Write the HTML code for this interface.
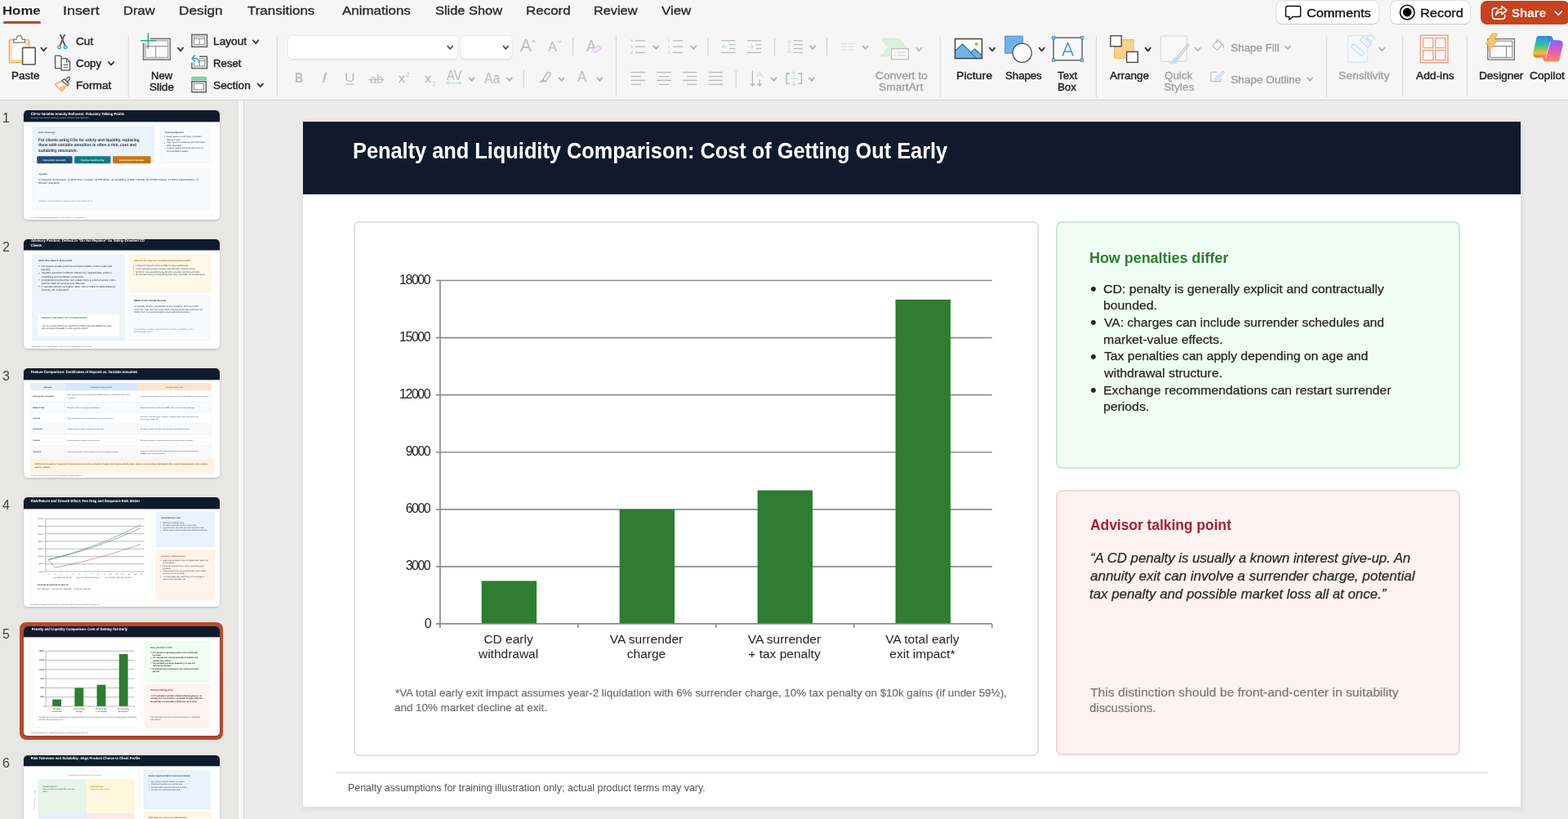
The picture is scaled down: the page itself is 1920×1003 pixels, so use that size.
<!DOCTYPE html>
<html lang="en"><head><meta charset="utf-8"><title>Penalty and Liquidity Comparison</title>
<style>
html,body{margin:0;padding:0;}
body{width:1920px;height:1003px;overflow:hidden;background:#ebebeb;font-family:'Liberation Sans',sans-serif;}
#app{position:relative;width:1920px;height:1003px;overflow:hidden;background:#ebebeb;will-change:transform;}
.t{position:absolute;white-space:pre;line-height:1;transform-origin:0 50%;}
.a{position:absolute;}
svg{position:absolute;overflow:visible;}
#ribbon{position:absolute;left:0;top:0;width:1920px;height:122px;background:#f6f6f6;border-bottom:1px solid #d3d3d1;}
#panel{position:absolute;left:0;top:123px;width:292px;height:880px;background:#e7e7e5;overflow:hidden;}
#split{position:absolute;left:292px;top:123px;width:5.5px;height:880px;background:#f7f7f5;border-right:1.5px solid #d4d4d4;}
#main{position:absolute;left:299px;top:123px;width:1621px;height:880px;background:#ebebeb;overflow:hidden;}
.slide{position:absolute;width:1491px;height:839px;background:#fff;overflow:hidden;}
#slide{left:72px;top:26px;box-shadow:1px 2px 8px 1px rgba(0,0,0,.075);}
.sep{position:absolute;width:1px;background:#d6d6d6;}
.card{position:absolute;box-sizing:border-box;border-radius:6px;}
.thumb{position:absolute;width:240px;height:134.4px;border-radius:5px;overflow:hidden;box-shadow:0 1px 3px rgba(0,0,0,.22);background:#fff;}
.thumb .slide{left:0;top:-0.5px;transform:scale(0.16097);transform-origin:0 0;}
.thumb .ttl{margin-top:-5px;}
.thumb svg line{stroke-width:3px;stroke:#747474;}
.num{position:absolute;font-size:16px;color:#444;line-height:1;}
.thumb .t,.thumb text{text-rendering:geometricPrecision;}

</style></head>
<body>
<div id="app">
<div id="panel"><span class="num" style="left:3px;top:14.2px">1</span><div class="thumb" style="left:28.8px;top:12.0px"><div class="slide"><div class="a" style="left:0px;top:0px;width:1491px;height:89px;background:#0f1b2d;"></div><span class="t" style="left:54.97px;top:11px;line-height:31px;font-size:28px;color:#fff;transform:scaleX(0.9122);font-weight:700;">CD-to-Variable Annuity Rollovers: Fiduciary Talking Points</span><span class="t" style="left:54.60px;top:51px;line-height:15px;font-size:13.5px;color:#cfd6e0;transform:scaleX(1.0958);">Fiduciary talk track for advisory practices: client-first training edition</span><div class="card" style="left:66px;top:125px;width:929px;height:274px;background:#eaf2fb;border:2px solid #d3e2f3;border-radius:8px"></div><span class="t" style="left:113.43px;top:157px;line-height:19px;font-size:17px;color:#1f4e79;transform:scaleX(1.0670);font-weight:700;">Core message</span><span class="t" style="left:111.55px;top:206px;line-height:35px;font-size:31px;color:#1c2a3a;transform:scaleX(0.9463);font-weight:700;">For clients using CDs for safety and liquidity, replacing</span><span class="t" style="left:113.39px;top:247px;line-height:35px;font-size:31px;color:#1c2a3a;transform:scaleX(0.9687);font-weight:700;">them with variable annuities is often a risk, cost and</span><span class="t" style="left:112.45px;top:288px;line-height:35px;font-size:31px;color:#1c2a3a;transform:scaleX(0.9703);font-weight:700;">suitability mismatch.</span><div class="a" style="left:101px;top:349px;width:269px;height:57px;background:#1f4e79;border-radius:9px;"></div><span class="t" style="left:147.94px;top:370px;line-height:17px;font-size:15.5px;color:#fff;transform:scaleX(1.0617);font-weight:700;">Risk profile mismatch</span><div class="a" style="left:386px;top:349px;width:276px;height:57px;background:#0e7c86;border-radius:9px;"></div><span class="t" style="left:432.97px;top:370px;line-height:17px;font-size:15.5px;color:#fff;transform:scaleX(1.0340);font-weight:700;">Penalty &amp; liquidity drag</span><div class="a" style="left:678px;top:349px;width:289px;height:57px;background:#c9760f;border-radius:9px;"></div><span class="t" style="left:724.74px;top:370px;line-height:17px;font-size:15.5px;color:#fff;transform:scaleX(1.2627);font-weight:700;">Best-interest burden</span><div class="card" style="left:1036px;top:125px;width:386px;height:274px;background:#f8fafc;border:2px solid #e2e8f0;border-radius:8px"></div><span class="t" style="left:1072.00px;top:157px;line-height:19px;font-size:17px;color:#1f4e79;transform:scaleX(1.0131);font-weight:700;">Training objective</span><span class="t" style="left:1086.79px;top:193px;line-height:17px;font-size:15px;color:#2b3644;transform:scaleX(1.1175);">Equip advisors with clear, compliant</span><span class="t" style="left:1067.53px;top:191px;line-height:21px;font-size:18.75px;color:#2b3644;">•</span><span class="t" style="left:1087.90px;top:215px;line-height:17px;font-size:15px;color:#2b3644;transform:scaleX(1.1387);">talking points</span><span class="t" style="left:1088.12px;top:238px;line-height:17px;font-size:15px;color:#2b3644;transform:scaleX(1.1051);">Align recommendations with FINRA and</span><span class="t" style="left:1067.53px;top:236px;line-height:21px;font-size:18.75px;color:#2b3644;">•</span><span class="t" style="left:1086.83px;top:260px;line-height:17px;font-size:15px;color:#2b3644;transform:scaleX(1.0876);">NAIC standards</span><span class="t" style="left:1086.81px;top:282px;line-height:17px;font-size:15px;color:#2b3644;transform:scaleX(1.1029);">Reduce replacement risk and improve</span><span class="t" style="left:1067.53px;top:280px;line-height:21px;font-size:18.75px;color:#2b3644;">•</span><span class="t" style="left:1087.41px;top:304px;line-height:17px;font-size:15px;color:#2b3644;transform:scaleX(1.1368);">documentation quality</span><div class="card" style="left:66px;top:447px;width:1356px;height:307px;background:#f8fafc;border:2px solid #e2e8f0;border-radius:8px"></div><span class="t" style="left:113.72px;top:473px;line-height:19px;font-size:17px;color:#1f4e79;transform:scaleX(1.0614);font-weight:700;">Agenda</span><span class="t" style="left:112.07px;top:516px;line-height:21px;font-size:19px;color:#2b3644;transform:scaleX(1.1116);">1) Feature comparison  2) Risk/return impact  3) Penalties  4) Suitability &amp; best interest  5) FINRA issues  6) NAIC expectations  7)</span><span class="t" style="left:113.39px;top:542px;line-height:21px;font-size:19px;color:#2b3644;transform:scaleX(1.1128);">Advisor playbook</span><span class="t" style="left:113.39px;top:684px;line-height:16px;font-size:14.5px;color:#7a8594;transform:scaleX(1.0643);">Audience: internal advisor training (not for client distribution).</span><div class="a" style="left:40px;top:797px;width:1411px;height:2px;background:#e3e6e9;"></div><span class="t" style="left:54.71px;top:809px;line-height:14px;font-size:12.5px;color:#666;transform:scaleX(1.1471);">Internal educational training deck; not a substitute for legal advice.</span></div></div><span class="num" style="left:3px;top:172.2px">2</span><div class="thumb" style="left:28.8px;top:170.0px"><div class="slide"><div class="a" style="left:0px;top:0px;width:1491px;height:84px;background:#0f1b2d;"></div><span class="t" style="left:55.60px;top:-8px;line-height:31px;font-size:28px;color:#fff;transform:scaleX(0.9218);font-weight:700;">Advisory Position: Default to “Do Not Replace” for Safety-Oriented CD</span><span class="t" style="left:55.23px;top:29px;line-height:31px;font-size:28px;color:#fff;transform:scaleX(0.8758);font-weight:700;">Clients</span><div class="card" style="left:66px;top:119px;width:704px;height:653px;background:#eef4fb;border:2px solid #d6e4f3;border-radius:8px"></div><span class="t" style="left:114.00px;top:150px;line-height:20px;font-size:18px;color:#1f4e79;transform:scaleX(1.1094);font-weight:700;">Why this stance is prudent</span><span class="t" style="left:133.60px;top:196px;line-height:21px;font-size:19px;color:#2b3644;transform:scaleX(1.0318);">CD buyers usually prioritize principal stability, known yield and</span><span class="t" style="left:113.77px;top:193px;line-height:26px;font-size:23.75px;color:#2b3644;">•</span><span class="t" style="left:133.19px;top:222px;line-height:21px;font-size:19px;color:#2b3644;transform:scaleX(1.1196);">liquidity.</span><span class="t" style="left:134.52px;top:248px;line-height:21px;font-size:19px;color:#2b3644;transform:scaleX(1.0263);">Variable annuities introduce market risk, layered fees, product</span><span class="t" style="left:113.77px;top:245px;line-height:26px;font-size:23.75px;color:#2b3644;">•</span><span class="t" style="left:133.90px;top:274px;line-height:21px;font-size:19px;color:#2b3644;transform:scaleX(1.0294);">complexity and surrender constraints.</span><span class="t" style="left:134.52px;top:300px;line-height:21px;font-size:19px;color:#2b3644;transform:scaleX(1.0110);">A replacement should be rare unless there is a documented, client-</span><span class="t" style="left:113.77px;top:297px;line-height:26px;font-size:23.75px;color:#2b3644;">•</span><span class="t" style="left:134.21px;top:326px;line-height:21px;font-size:19px;color:#2b3644;transform:scaleX(1.0278);">specific need for annuity-only features.</span><span class="t" style="left:133.04px;top:352px;line-height:21px;font-size:19px;color:#2b3644;transform:scaleX(0.9921);">If rationale centers on “higher rates”, bonus offers or sales pressure,</span><span class="t" style="left:113.77px;top:349px;line-height:26px;font-size:23.75px;color:#2b3644;">•</span><span class="t" style="left:134.52px;top:378px;line-height:21px;font-size:19px;color:#2b3644;transform:scaleX(1.0059);">fiduciary risk is elevated.</span><div class="card" style="left:105px;top:568px;width:624px;height:173px;background:#ffffff;border:2px solid #dbe7f3;border-radius:8px"></div><span class="t" style="left:136.32px;top:588px;line-height:19px;font-size:17px;color:#0e7c86;transform:scaleX(1.0137);font-weight:700;">Fiduciary test before any recommendation</span><span class="t" style="left:136.59px;top:648px;line-height:18px;font-size:16.5px;color:#2b3644;transform:scaleX(1.0474);">Can we clearly show that expected benefits outweigh additional costs,</span><span class="t" style="left:136.31px;top:671px;line-height:18px;font-size:16.5px;color:#2b3644;transform:scaleX(1.0575);">risk and loss of liquidity for this specific client?</span><div class="card" style="left:801px;top:119px;width:621px;height:285px;background:#fff8e8;border:2px solid #f5e0b0;border-radius:8px"></div><span class="t" style="left:840.00px;top:150px;line-height:19px;font-size:17px;color:#b96a0b;transform:scaleX(1.1215);font-weight:700;">When a VA may be considered (exception path)</span><span class="t" style="left:853.35px;top:195px;line-height:17px;font-size:16px;color:#2b3644;transform:scaleX(1.0749);">Long time horizon and low odds of early withdrawals</span><span class="t" style="left:834.13px;top:192px;line-height:22px;font-size:20.0px;color:#2b3644;">•</span><span class="t" style="left:853.88px;top:217px;line-height:17px;font-size:16px;color:#2b3644;transform:scaleX(1.0766);">Client accepts market volatility and complex contract terms</span><span class="t" style="left:834.13px;top:214px;line-height:22px;font-size:20.0px;color:#2b3644;">•</span><span class="t" style="left:853.32px;top:239px;line-height:17px;font-size:16px;color:#2b3644;transform:scaleX(1.0942);">Need for annuitization/living benefit is explicit and documented</span><span class="t" style="left:834.13px;top:236px;line-height:22px;font-size:20.0px;color:#2b3644;">•</span><span class="t" style="left:853.36px;top:260px;line-height:17px;font-size:16px;color:#2b3644;transform:scaleX(1.0644);">Net benefit clearly is compelling after fees, surrender terms and taxes</span><span class="t" style="left:834.13px;top:257px;line-height:22px;font-size:20.0px;color:#2b3644;">•</span><div class="card" style="left:801px;top:429px;width:621px;height:343px;background:#f9fafb;border:2px solid #e3e8ee;border-radius:8px"></div><span class="t" style="left:840.00px;top:458px;line-height:20px;font-size:18px;color:#1c2a3a;transform:scaleX(1.0694);font-weight:700;">What to tell clients directly</span><span class="t" style="left:839.26px;top:500px;line-height:19px;font-size:17px;color:#2b3644;transform:scaleX(1.0274);font-style:italic;">“A variable annuity can provide income features, but it is not like</span><span class="t" style="left:841.51px;top:523px;line-height:19px;font-size:17px;color:#2b3644;transform:scaleX(1.0857);font-style:italic;">your CD. You give up FDIC-style deposit protection and take on</span><span class="t" style="left:840.09px;top:545px;line-height:19px;font-size:17px;color:#2b3644;transform:scaleX(0.9744);font-style:italic;">market risk, fees and potentially steep surrender penalties.”</span><span class="t" style="left:839.22px;top:676px;line-height:17px;font-size:15px;color:#7a8594;transform:scaleX(0.9549);">Document the comparison and confirm the client’s understanding in the</span><span class="t" style="left:839.45px;top:698px;line-height:17px;font-size:15px;color:#7a8594;transform:scaleX(0.9670);">plain-language record.</span><div class="a" style="left:40px;top:797px;width:1411px;height:2px;background:#e3e6e9;"></div><span class="t" style="left:56.00px;top:809px;line-height:14px;font-size:12.5px;color:#666;transform:scaleX(0.9258);">Advisor framework: CD clients should be treated as low-risk unless documented otherwise.</span></div></div><span class="num" style="left:3px;top:330.2px">3</span><div class="thumb" style="left:28.8px;top:328.0px"><div class="slide"><div class="a" style="left:0px;top:0px;width:1491px;height:89px;background:#0f1b2d;"></div><span class="t" style="left:54.39px;top:14px;line-height:31px;font-size:28px;color:#fff;transform:scaleX(0.9195);font-weight:700;">Feature Comparison: Certificates of Deposit vs. Variable Annuities</span><div class="a" style="left:53px;top:113px;width:260px;height:55px;background:#e8eef6;"></div><div class="a" style="left:313px;top:113px;width:555px;height:55px;background:#d6e8fb;"></div><div class="a" style="left:868px;top:113px;width:555px;height:55px;background:#fde4cc;"></div><div class="a" style="left:53px;top:258px;width:1370px;height:79px;background:#f8fafc;"></div><div class="a" style="left:53px;top:422px;width:1370px;height:79px;background:#f8fafc;"></div><div class="a" style="left:53px;top:591px;width:1370px;height:92px;background:#f8fafc;"></div><div class="a" style="left:53px;top:112px;width:1370px;height:2px;background:#dde3ea;"></div><div class="a" style="left:53px;top:167px;width:1370px;height:2px;background:#dde3ea;"></div><div class="a" style="left:53px;top:257px;width:1370px;height:2px;background:#dde3ea;"></div><div class="a" style="left:53px;top:336px;width:1370px;height:2px;background:#dde3ea;"></div><div class="a" style="left:53px;top:421px;width:1370px;height:2px;background:#dde3ea;"></div><div class="a" style="left:53px;top:500px;width:1370px;height:2px;background:#dde3ea;"></div><div class="a" style="left:53px;top:590px;width:1370px;height:2px;background:#dde3ea;"></div><div class="a" style="left:53px;top:682px;width:1370px;height:2px;background:#dde3ea;"></div><div class="a" style="left:52px;top:113px;width:2px;height:570px;background:#dde3ea;"></div><div class="a" style="left:312px;top:113px;width:2px;height:570px;background:#dde3ea;"></div><div class="a" style="left:867px;top:113px;width:2px;height:570px;background:#dde3ea;"></div><div class="a" style="left:1422px;top:113px;width:2px;height:570px;background:#dde3ea;"></div><span class="t" style="left:151.66px;top:133px;line-height:16px;font-size:14px;color:#1c2a3a;transform:scaleX(1.0775);font-weight:700;">Attribute</span><span class="t" style="left:509.47px;top:133px;line-height:16px;font-size:14px;color:#1f5fa8;transform:scaleX(0.9364);font-weight:700;">Certificate of Deposit (CD)</span><span class="t" style="left:1079.94px;top:133px;line-height:16px;font-size:14px;color:#c2620c;transform:scaleX(0.9389);font-weight:700;">Variable Annuity (VA)</span><span class="t" style="left:69.12px;top:206px;line-height:15px;font-size:13.5px;color:#1c2a3a;font-weight:700;">Principal risk / guarantee</span><span class="t" style="left:331.94px;top:196px;line-height:15px;font-size:13px;color:#3b4654;">Bank deposit product; principal typically FDIC-insured up to applicable limits if held</span><span class="t" style="left:332.81px;top:216px;line-height:15px;font-size:13px;color:#3b4654;">to maturity.</span><span class="t" style="left:886.81px;top:206px;line-height:15px;font-size:13px;color:#3b4654;">Invested in sub-accounts exposed to market risk; guarantees depend on insurer and riders.</span><span class="t" style="left:69.12px;top:290px;line-height:15px;font-size:13.5px;color:#1c2a3a;font-weight:700;">Return &amp; fees</span><span class="t" style="left:331.94px;top:290px;line-height:15px;font-size:13px;color:#3b4654;">Fixed rate; little or no ongoing explicit fees.</span><span class="t" style="left:886.94px;top:290px;line-height:15px;font-size:13px;color:#3b4654;">Market-linked returns reduced by M&amp;E, admin, fund and rider expenses.</span><span class="t" style="left:69.12px;top:372px;line-height:15px;font-size:13.5px;color:#1c2a3a;font-weight:700;">Liquidity</span><span class="t" style="left:331.94px;top:372px;line-height:15px;font-size:13px;color:#3b4654;">Early withdrawal penalty usually limited to months of interest.</span><span class="t" style="left:887.44px;top:363px;line-height:15px;font-size:13px;color:#3b4654;">Surrender schedule (often 6–8 years); possible market value adjustment and</span><span class="t" style="left:887.81px;top:382px;line-height:15px;font-size:13px;color:#3b4654;">tax penalty if under 59½.</span><span class="t" style="left:69.50px;top:454px;line-height:15px;font-size:13.5px;color:#1c2a3a;font-weight:700;">Complexity</span><span class="t" style="left:332.44px;top:454px;line-height:15px;font-size:13px;color:#3b4654;">Simple structure; easy to compare across banks.</span><span class="t" style="left:887.38px;top:454px;line-height:15px;font-size:13px;color:#3b4654;">Complex contract with riders, sub-accounts and optional benefits.</span><span class="t" style="left:69.88px;top:539px;line-height:15px;font-size:13.5px;color:#1c2a3a;font-weight:700;">Taxation</span><span class="t" style="left:331.81px;top:539px;line-height:15px;font-size:13px;color:#3b4654;">Interest taxed annually as ordinary income.</span><span class="t" style="left:887.75px;top:539px;line-height:15px;font-size:13px;color:#3b4654;">Tax-deferred growth; gains taxed as ordinary income when withdrawn.</span><span class="t" style="left:69.88px;top:630px;line-height:15px;font-size:13.5px;color:#1c2a3a;font-weight:700;">Typical fit</span><span class="t" style="left:332.38px;top:630px;line-height:15px;font-size:13px;color:#3b4654;">Capital preservation, short-to-medium horizon, emergency reserves.</span><span class="t" style="left:886.94px;top:620px;line-height:15px;font-size:13px;color:#3b4654;">Long-term retirement income, higher risk tolerance, need for annuity features;</span><span class="t" style="left:887.69px;top:640px;line-height:15px;font-size:13px;color:#3b4654;">suitable only if costs are justified.</span><div class="card" style="left:53px;top:690px;width:1394px;height:109px;background:#fff4e1;border:2px solid #f6dcae;border-radius:8px"></div><span class="t" style="left:85.08px;top:723px;line-height:16px;font-size:14px;color:#7a4a08;transform:scaleX(1.0515);font-weight:700;">FINRA/investor caution: high-yield VA promotions can involve surrender charges and complex annuity rules; advisors should clearly distinguish CDs, insured bank products, from variable</span><span class="t" style="left:85.63px;top:744px;line-height:16px;font-size:14px;color:#7a4a08;transform:scaleX(0.9895);font-weight:700;">annuity contracts.</span><span class="t" style="left:55.45px;top:809px;line-height:14px;font-size:12.5px;color:#666;transform:scaleX(0.9784);">Sources: FINRA investor insights; NAIC suitability in annuity transactions.</span></div></div><span class="num" style="left:3px;top:488.2px">4</span><div class="thumb" style="left:28.8px;top:486.0px"><div class="slide"><div class="a" style="left:0px;top:0px;width:1491px;height:89px;background:#0f1b2d;"></div><span class="t" style="left:54.38px;top:14px;line-height:31px;font-size:28px;color:#fff;transform:scaleX(0.9229);font-weight:700;">Risk/Return and Growth Effect: Fee Drag and Sequence Risk Matter</span><div class="card" style="left:53px;top:106px;width:928px;height:677px;background:#fff;border:2px solid #dfe4ea;border-radius:8px"></div><svg class="a" style="left:0;top:0" width="1491" height="839" viewBox="0 0 1491 839" font-family="Liberation Sans, sans-serif" fill="none"><line x1="160" y1="163.0" x2="918" y2="163.0" stroke="#7d7d7d" stroke-width="2.6"/><text x="152" y="168.0" font-size="13" fill="#333" text-anchor="end">200000</text><line x1="160" y1="220.4" x2="918" y2="220.4" stroke="#7d7d7d" stroke-width="2.6"/><text x="152" y="225.4" font-size="13" fill="#333" text-anchor="end">180000</text><line x1="160" y1="277.8" x2="918" y2="277.8" stroke="#7d7d7d" stroke-width="2.6"/><text x="152" y="282.8" font-size="13" fill="#333" text-anchor="end">160000</text><line x1="160" y1="335.2" x2="918" y2="335.2" stroke="#7d7d7d" stroke-width="2.6"/><text x="152" y="340.2" font-size="13" fill="#333" text-anchor="end">140000</text><line x1="160" y1="392.6" x2="918" y2="392.6" stroke="#7d7d7d" stroke-width="2.6"/><text x="152" y="397.6" font-size="13" fill="#333" text-anchor="end">120000</text><line x1="160" y1="450.0" x2="918" y2="450.0" stroke="#7d7d7d" stroke-width="2.6"/><text x="152" y="455.0" font-size="13" fill="#333" text-anchor="end">100000</text><line x1="160" y1="507.4" x2="918" y2="507.4" stroke="#7d7d7d" stroke-width="2.6"/><text x="152" y="512.4" font-size="13" fill="#333" text-anchor="end">80000</text><line x1="160" y1="564.8" x2="918" y2="564.8" stroke="#7d7d7d" stroke-width="2.6"/><text x="152" y="569.8" font-size="13" fill="#333" text-anchor="end">60000</text><line x1="168" y1="163.0" x2="168" y2="572.8" stroke="#8a8a8a" stroke-width="2"/><polyline points="188.0,475.0 234.9,464.1 281.9,452.5 328.8,440.2 375.7,427.0 422.7,413.2 469.6,398.5 516.5,383.1 563.5,367.0 610.4,350.1 657.3,332.5 704.3,314.1 751.2,295.0 798.1,275.1 845.1,254.4 892.0,233.0" stroke="#4b5563" stroke-width="3.2" stroke-linejoin="round"/><polyline points="188.0,475.0 234.9,463.0 281.9,450.2 328.8,436.6 375.7,422.1 422.7,406.8 469.6,390.6 516.5,373.7 563.5,355.9 610.4,337.2 657.3,317.8 704.3,297.5 751.2,276.4 798.1,254.4 845.1,231.6 892.0,208.0" stroke="#2e7d32" stroke-width="3.2" stroke-linejoin="round"/><polyline points="188.0,475.0 238.0,535.0 288.3,525.0 338.6,514.5 388.9,503.2 439.2,491.4 489.5,478.9 539.8,465.7 590.2,452.0 640.5,437.6 690.8,422.5 741.1,406.8 791.4,390.5 841.7,373.6 892.0,356.0" stroke="#c0305a" stroke-width="3.2" stroke-linejoin="round"/><text x="190.0" y="588.8" font-size="13" fill="#333" text-anchor="middle">0</text><text x="237.1" y="588.8" font-size="13" fill="#333" text-anchor="middle">1</text><text x="284.1" y="588.8" font-size="13" fill="#333" text-anchor="middle">2</text><text x="331.2" y="588.8" font-size="13" fill="#333" text-anchor="middle">3</text><text x="378.3" y="588.8" font-size="13" fill="#333" text-anchor="middle">4</text><text x="425.3" y="588.8" font-size="13" fill="#333" text-anchor="middle">5</text><text x="472.4" y="588.8" font-size="13" fill="#333" text-anchor="middle">6</text><text x="519.5" y="588.8" font-size="13" fill="#333" text-anchor="middle">7</text><text x="566.5" y="588.8" font-size="13" fill="#333" text-anchor="middle">8</text><text x="613.6" y="588.8" font-size="13" fill="#333" text-anchor="middle">9</text><text x="660.7" y="588.8" font-size="13" fill="#333" text-anchor="middle">10</text><text x="707.7" y="588.8" font-size="13" fill="#333" text-anchor="middle">11</text><text x="754.8" y="588.8" font-size="13" fill="#333" text-anchor="middle">12</text><text x="801.9" y="588.8" font-size="13" fill="#333" text-anchor="middle">13</text><text x="848.9" y="588.8" font-size="13" fill="#333" text-anchor="middle">14</text><text x="896.0" y="588.8" font-size="13" fill="#333" text-anchor="middle">15</text><polyline points="226,613 252,613" stroke="#2e7d32" stroke-width="3"/><text x="258" y="618" font-size="13.5" fill="#333">CD ladder (4.5%)</text><polyline points="401.2,613 427.2,613" stroke="#4b5563" stroke-width="3"/><text x="433.2" y="618" font-size="13.5" fill="#333">VA balanced (net 4.1%)</text><polyline points="619.6,613 645.6,613" stroke="#c0305a" stroke-width="3"/><text x="651.6" y="618" font-size="13.5" fill="#333">VA with −20% year-1 shock</text></svg><span class="t" style="left:105.59px;top:655px;line-height:17px;font-size:16px;color:#1c2a3a;transform:scaleX(1.0110);font-weight:700;">Illustrative outcome at year 15</span><span class="t" style="left:105.97px;top:691px;line-height:16px;font-size:14.5px;color:#3b4654;transform:scaleX(1.0161);">CD: $193,528    VA balanced: $182,694    VA shock: $150,215</span><div class="card" style="left:1006px;top:109px;width:446px;height:268px;background:#eaf2fb;border:2px solid #d3e2f3;border-radius:8px"></div><span class="t" style="left:1041.63px;top:146px;line-height:17px;font-size:16px;color:#1f4e79;transform:scaleX(1.0502);font-weight:700;">Assumptions used</span><span class="t" style="left:1059.17px;top:183px;line-height:16px;font-size:14px;color:#2b3644;transform:scaleX(1.1073);">$100,000 starting value</span><span class="t" style="left:1038.76px;top:181px;line-height:20px;font-size:17.5px;color:#2b3644;">•</span><span class="t" style="left:1058.62px;top:203px;line-height:16px;font-size:14px;color:#2b3644;transform:scaleX(1.0009);">CD ladder reinvests at 4.5% annual yield</span><span class="t" style="left:1038.76px;top:201px;line-height:20px;font-size:17.5px;color:#2b3644;">•</span><span class="t" style="left:1059.31px;top:223px;line-height:16px;font-size:14px;color:#2b3644;transform:scaleX(0.9782);">VA gross 6.5%, less 2.4% all-in fees and rider costs</span><span class="t" style="left:1038.76px;top:221px;line-height:20px;font-size:17.5px;color:#2b3644;">•</span><span class="t" style="left:1058.63px;top:244px;line-height:16px;font-size:14px;color:#2b3644;transform:scaleX(1.0897);">Shock case includes early bear market drawdown</span><span class="t" style="left:1038.76px;top:242px;line-height:20px;font-size:17.5px;color:#2b3644;">•</span><div class="card" style="left:1006px;top:401px;width:446px;height:377px;background:#fff3ea;border:2px solid #f8dcc4;border-radius:8px"></div><span class="t" style="left:1041.62px;top:439px;line-height:17px;font-size:16px;color:#c2620c;transform:scaleX(1.0719);font-weight:700;">Advisory interpretation</span><span class="t" style="left:1058.05px;top:472px;line-height:16px;font-size:14px;color:#2b3644;transform:scaleX(1.1176);">Higher gross return does not guarantee higher net</span><span class="t" style="left:1038.76px;top:470px;line-height:20px;font-size:17.5px;color:#2b3644;">•</span><span class="t" style="left:1058.72px;top:492px;line-height:16px;font-size:14px;color:#2b3644;transform:scaleX(1.0449);">accumulation.</span><span class="t" style="left:1058.06px;top:513px;line-height:16px;font-size:14px;color:#2b3644;transform:scaleX(1.1130);">Fees can absorb much of the expected equity</span><span class="t" style="left:1038.76px;top:511px;line-height:20px;font-size:17.5px;color:#2b3644;">•</span><span class="t" style="left:1058.34px;top:533px;line-height:16px;font-size:14px;color:#2b3644;transform:scaleX(1.1106);">premium.</span><span class="t" style="left:1058.05px;top:554px;line-height:16px;font-size:14px;color:#2b3644;transform:scaleX(1.1214);">Early drawdowns can permanently lower wealth</span><span class="t" style="left:1038.76px;top:552px;line-height:20px;font-size:17.5px;color:#2b3644;">•</span><span class="t" style="left:1058.75px;top:574px;line-height:16px;font-size:14px;color:#2b3644;transform:scaleX(0.9882);">and force income flexibility.</span><span class="t" style="left:1059.31px;top:594px;line-height:16px;font-size:14px;color:#2b3644;transform:scaleX(1.1066);">A conservative CD client may not be willing or</span><span class="t" style="left:1038.76px;top:592px;line-height:20px;font-size:17.5px;color:#2b3644;">•</span><span class="t" style="left:1058.70px;top:615px;line-height:16px;font-size:14px;color:#2b3644;transform:scaleX(1.0800);">able to bear that path risk.</span><span class="t" style="left:49.56px;top:809px;line-height:14px;font-size:12.5px;color:#666;transform:scaleX(1.2552);">Illustration is hypothetical and for training only; not a performance guarantee.</span></div></div><span class="num" style="left:3px;top:646.1px">5</span><div class="a" style="left:24.4px;top:639.1px;width:249px;height:143.6px;border-radius:8px;background:#b94b2d"></div><div class="thumb" style="left:28.8px;top:643.9px"><div class="slide"><div class="a" style="left:-371px;top:-149px;width:0;height:0"><div class="a" style="left:371px;top:149px;width:1491px;height:89px;background:#0f1b2d;"></div><span class="t ttl" style="left:431.91px;top:168px;line-height:32px;font-size:28.2px;color:#fff;transform:scaleX(0.8994);font-weight:700;">Penalty and Liquidity Comparison: Cost of Getting Out Early</span><div class="card" style="left:433px;top:271px;width:838.5px;height:654.5px;background:#fff;border:2px solid #dfe2e6;border-radius:7px"></div><svg class="a" style="left:371px;top:149px" width="1491" height="839" viewBox="371 149 1491 839" font-family="Liberation Sans, sans-serif"><line x1="533.9" y1="763.95" x2="1214.7" y2="763.95" stroke="#8d8d8d" stroke-width="1.7"/><text x="519.64" y="768.55" font-size="15.8" fill="#222" textLength="7.96" lengthAdjust="spacing">0</text><line x1="533.9" y1="693.88" x2="1214.7" y2="693.88" stroke="#8d8d8d" stroke-width="1.7"/><text x="496.66" y="698.48" font-size="15.8" fill="#222" textLength="30.94" lengthAdjust="spacing">3000</text><line x1="533.9" y1="623.80" x2="1214.7" y2="623.80" stroke="#8d8d8d" stroke-width="1.7"/><text x="496.66" y="628.40" font-size="15.8" fill="#222" textLength="30.94" lengthAdjust="spacing">6000</text><line x1="533.9" y1="553.73" x2="1214.7" y2="553.73" stroke="#8d8d8d" stroke-width="1.7"/><text x="496.66" y="558.33" font-size="15.8" fill="#222" textLength="30.94" lengthAdjust="spacing">9000</text><line x1="533.9" y1="483.65" x2="1214.7" y2="483.65" stroke="#8d8d8d" stroke-width="1.7"/><text x="489.00" y="488.25" font-size="15.8" fill="#222" textLength="38.60" lengthAdjust="spacing">12000</text><line x1="533.9" y1="413.58" x2="1214.7" y2="413.58" stroke="#8d8d8d" stroke-width="1.7"/><text x="489.00" y="418.18" font-size="15.8" fill="#222" textLength="38.60" lengthAdjust="spacing">15000</text><line x1="533.9" y1="343.50" x2="1214.7" y2="343.50" stroke="#8d8d8d" stroke-width="1.7"/><text x="489.00" y="348.10" font-size="15.8" fill="#222" textLength="38.60" lengthAdjust="spacing">18000</text><line x1="538.9" y1="342.80" x2="538.9" y2="768.95" stroke="#8d8d8d" stroke-width="1.7"/><line x1="707.85" y1="763.95" x2="707.85" y2="768.95" stroke="#8d8d8d" stroke-width="1.7"/><line x1="876.80" y1="763.95" x2="876.80" y2="768.95" stroke="#8d8d8d" stroke-width="1.7"/><line x1="1045.75" y1="763.95" x2="1045.75" y2="768.95" stroke="#8d8d8d" stroke-width="1.7"/><line x1="1214.70" y1="763.95" x2="1214.70" y2="768.95" stroke="#8d8d8d" stroke-width="1.7"/><rect x="589.67" y="711.39" width="67.4" height="51.86" fill="#2e7d32"/><text x="622.58" y="788" font-size="15.5" fill="#1f1f1f" text-anchor="middle">CD early</text><text x="622.58" y="805.6" font-size="15.5" fill="#1f1f1f" text-anchor="middle">withdrawal</text><rect x="758.62" y="623.80" width="67.4" height="139.45" fill="#2e7d32"/><text x="791.53" y="788" font-size="15.5" fill="#1f1f1f" text-anchor="middle">VA surrender</text><text x="791.53" y="805.6" font-size="15.5" fill="#1f1f1f" text-anchor="middle">charge</text><rect x="927.58" y="600.44" width="67.4" height="162.81" fill="#2e7d32"/><text x="960.48" y="788" font-size="15.5" fill="#1f1f1f" text-anchor="middle">VA surrender</text><text x="960.48" y="805.6" font-size="15.5" fill="#1f1f1f" text-anchor="middle">+ tax penalty</text><rect x="1096.52" y="366.86" width="67.4" height="396.39" fill="#2e7d32"/><text x="1129.42" y="788" font-size="15.5" fill="#1f1f1f" text-anchor="middle">VA total early</text><text x="1129.42" y="805.6" font-size="15.5" fill="#1f1f1f" text-anchor="middle">exit impact*</text></svg><span class="t" style="left:483.82px;top:841px;line-height:15px;font-size:13.6px;color:#6e6e6e;transform:scaleX(0.9825);-webkit-text-stroke:0.2px;">*VA total early exit impact assumes year-2 liquidation with 6% surrender charge, 10% tax penalty on $10k gains (if under 59½),</span><span class="t" style="left:482.95px;top:859px;line-height:15px;font-size:13.6px;color:#6e6e6e;transform:scaleX(0.9853);-webkit-text-stroke:0.2px;">and 10% market decline at exit.</span><div class="card" style="left:1293px;top:271px;width:494.5px;height:302.5px;background:#f0fdf4;border:2px solid #c6ebd2;border-radius:7px"></div><span class="t" style="left:1334.38px;top:305px;line-height:21px;font-size:18.8px;color:#2e7d32;transform:scaleX(0.9533);font-weight:700;">How penalties differ</span><span class="t" style="left:1351.13px;top:345px;line-height:17px;font-size:15.4px;color:#262626;transform:scaleX(1.0275);-webkit-text-stroke:0.25px;">CD: penalty is generally explicit and contractually</span><span class="t" style="left:1334.91px;top:341px;line-height:25px;font-size:22px;color:#262626;">•</span><span class="t" style="left:1350.94px;top:365px;line-height:17px;font-size:15.4px;color:#262626;transform:scaleX(1.0260);-webkit-text-stroke:0.25px;">bounded.</span><span class="t" style="left:1351.84px;top:386px;line-height:17px;font-size:15.4px;color:#262626;transform:scaleX(1.0130);-webkit-text-stroke:0.25px;">VA: charges can include surrender schedules and</span><span class="t" style="left:1334.91px;top:382px;line-height:25px;font-size:22px;color:#262626;">•</span><span class="t" style="left:1350.87px;top:407px;line-height:17px;font-size:15.4px;color:#262626;transform:scaleX(1.0260);-webkit-text-stroke:0.25px;">market-value effects.</span><span class="t" style="left:1351.58px;top:427px;line-height:17px;font-size:15.4px;color:#262626;transform:scaleX(1.0180);-webkit-text-stroke:0.25px;">Tax penalties can apply depending on age and</span><span class="t" style="left:1334.91px;top:424px;line-height:25px;font-size:22px;color:#262626;">•</span><span class="t" style="left:1351.96px;top:448px;line-height:17px;font-size:15.4px;color:#262626;transform:scaleX(1.0260);-webkit-text-stroke:0.25px;">withdrawal structure.</span><span class="t" style="left:1350.61px;top:469px;line-height:17px;font-size:15.4px;color:#262626;transform:scaleX(1.0300);-webkit-text-stroke:0.25px;">Exchange recommendations can restart surrender</span><span class="t" style="left:1334.91px;top:465px;line-height:25px;font-size:22px;color:#262626;">•</span><span class="t" style="left:1350.94px;top:489px;line-height:17px;font-size:15.4px;color:#262626;transform:scaleX(1.0260);-webkit-text-stroke:0.25px;">periods.</span><div class="card" style="left:1293px;top:600px;width:494.5px;height:324.5px;background:#fef2f2;border:2px solid #f7d3d8;border-radius:7px"></div><span class="t" style="left:1335.23px;top:632px;line-height:21px;font-size:18.8px;color:#a61d3a;transform:scaleX(0.9246);font-weight:700;">Advisor talking point</span><span class="t" style="left:1334.95px;top:674px;line-height:18px;font-size:16.2px;color:#2a2a2a;transform:scaleX(1.0337);font-style:italic;-webkit-text-stroke:0.25px;">“A CD penalty is usually a known interest give-up. An</span><span class="t" style="left:1334.73px;top:696px;line-height:18px;font-size:16.2px;color:#2a2a2a;transform:scaleX(1.0492);font-style:italic;-webkit-text-stroke:0.25px;">annuity exit can involve a surrender charge, potential</span><span class="t" style="left:1334.47px;top:718px;line-height:18px;font-size:16.2px;color:#2a2a2a;transform:scaleX(1.0405);font-style:italic;-webkit-text-stroke:0.25px;">tax penalty and possible market loss all at once.”</span><span class="t" style="left:1334.68px;top:839px;line-height:17px;font-size:15.2px;color:#787878;transform:scaleX(1.0328);-webkit-text-stroke:0.2px;">This distinction should be front-and-center in suitability</span><span class="t" style="left:1334.39px;top:858px;line-height:17px;font-size:15.2px;color:#787878;transform:scaleX(0.9837);-webkit-text-stroke:0.2px;">discussions.</span><div class="a" style="left:411px;top:945px;width:1411px;height:1.5px;background:#e3e6e9;"></div><span class="t" style="left:426.48px;top:958px;line-height:14px;font-size:12.2px;color:#555;transform:scaleX(1.0181);">Penalty assumptions for training illustration only; actual product terms may vary.</span></div></div></div><span class="num" style="left:3px;top:804.1px">6</span><div class="thumb" style="left:28.8px;top:801.9px"><div class="slide"><div class="a" style="left:0px;top:0px;width:1491px;height:89px;background:#0f1b2d;"></div><span class="t" style="left:54.40px;top:15px;line-height:31px;font-size:28px;color:#fff;transform:scaleX(0.9118);font-weight:700;">Risk Tolerance and Suitability: Align Product Choice to Client Profile</span><div class="card" style="left:57px;top:120px;width:823px;height:670px;background:#fff;border:2px solid #dfe4ea;border-radius:8px"></div><span class="t" style="left:341.53px;top:152px;line-height:15px;font-size:13px;color:#6b7280;transform:scaleX(0.8371);">Suitability Matrix (Risk Tolerance vs. Time Horizon)</span><div class="a" style="left:110px;top:190px;width:366px;height:262px;background:#e6f4ea;border:1.5px solid #cfe8d6;box-sizing:border-box;"></div><div class="a" style="left:476px;top:190px;width:366px;height:262px;background:#fff6dc;border:1.5px solid #f3e2ae;box-sizing:border-box;"></div><div class="a" style="left:110px;top:452px;width:366px;height:308px;background:#e6f0fb;border:1.5px solid #cfe0f3;box-sizing:border-box;"></div><div class="a" style="left:476px;top:452px;width:366px;height:308px;background:#fde8ea;border:1.5px solid #f5cdd2;box-sizing:border-box;"></div><span class="t" style="left:143.46px;top:234px;line-height:15px;font-size:13.5px;color:#2e7d32;transform:scaleX(1.0729);font-weight:700;">Conservative fit</span><span class="t" style="left:144.00px;top:256px;line-height:15px;font-size:13px;color:#2b3644;transform:scaleX(0.9300);">Align to insured, low-volatility CDs / short-term</span><span class="t" style="left:143.19px;top:274px;line-height:15px;font-size:13px;color:#2b3644;transform:scaleX(0.9300);">ladders</span><span class="t" style="left:507.05px;top:234px;line-height:15px;font-size:13.5px;color:#b96a0b;transform:scaleX(1.0825);font-weight:700;">Dual-outcome</span><span class="t" style="left:508.00px;top:256px;line-height:15px;font-size:13px;color:#b96a0b;transform:scaleX(1.2580);">Align liquidity needs</span><span class="t" style="left:-0.25px;top:-11px;line-height:14px;font-size:12px;color:#6b7280;left:78px;top:420px;transform:rotate(-90deg);transform-origin:0 0;">Time horizon (short → long)</span><div class="card" style="left:914px;top:119px;width:507px;height:298px;background:#eaf2fb;border:2px solid #d3e2f3;border-radius:8px"></div><span class="t" style="left:950.94px;top:155px;line-height:18px;font-size:16.5px;color:#1f4e79;transform:scaleX(1.0289);font-weight:700;">Know-required before recommendation</span><span class="t" style="left:968.00px;top:200px;line-height:15px;font-size:13.5px;color:#2b3644;transform:scaleX(1.0000);">Age, income, financial situation and needs</span><span class="t" style="left:949.47px;top:198px;line-height:19px;font-size:16.875px;color:#2b3644;">•</span><span class="t" style="left:966.81px;top:220px;line-height:15px;font-size:13.5px;color:#2b3644;transform:scaleX(1.0000);">Investment objectives and risk tolerance</span><span class="t" style="left:949.47px;top:218px;line-height:19px;font-size:16.875px;color:#2b3644;">•</span><span class="t" style="left:966.94px;top:240px;line-height:15px;font-size:13.5px;color:#2b3644;transform:scaleX(1.0000);">Liquidity needs, liquid net worth and tax status</span><span class="t" style="left:949.47px;top:238px;line-height:19px;font-size:16.875px;color:#2b3644;">•</span><span class="t" style="left:966.81px;top:260px;line-height:15px;font-size:13.5px;color:#2b3644;transform:scaleX(1.0000);">Insurable and investment experience</span><span class="t" style="left:949.47px;top:258px;line-height:19px;font-size:16.875px;color:#2b3644;">•</span><div class="card" style="left:914px;top:440px;width:507px;height:350px;background:#fff8e8;border:2px solid #f5e0b0;border-radius:8px"></div><span class="t" style="left:950.93px;top:469px;line-height:18px;font-size:16.5px;color:#b96a0b;transform:scaleX(1.0352);font-weight:700;">Red flags for CD-to-VA replacement</span></div></div></div>
<div id="split"></div>
<div id="main"><div id="slide" class="slide"><div class="a" style="left:-371px;top:-149px;width:0;height:0"><div class="a" style="left:371px;top:149px;width:1491px;height:89px;background:#0f1b2d;"></div><span class="t ttl" style="left:431.91px;top:168px;line-height:32px;font-size:28.2px;color:#fff;transform:scaleX(0.8994);font-weight:700;">Penalty and Liquidity Comparison: Cost of Getting Out Early</span><div class="card" style="left:433px;top:271px;width:838.5px;height:654.5px;background:#fff;border:2px solid #dfe2e6;border-radius:7px"></div><svg class="a" style="left:371px;top:149px" width="1491" height="839" viewBox="371 149 1491 839" font-family="Liberation Sans, sans-serif"><line x1="533.9" y1="763.95" x2="1214.7" y2="763.95" stroke="#8d8d8d" stroke-width="1.7"/><text x="519.64" y="768.55" font-size="15.8" fill="#222" textLength="7.96" lengthAdjust="spacing">0</text><line x1="533.9" y1="693.88" x2="1214.7" y2="693.88" stroke="#8d8d8d" stroke-width="1.7"/><text x="496.66" y="698.48" font-size="15.8" fill="#222" textLength="30.94" lengthAdjust="spacing">3000</text><line x1="533.9" y1="623.80" x2="1214.7" y2="623.80" stroke="#8d8d8d" stroke-width="1.7"/><text x="496.66" y="628.40" font-size="15.8" fill="#222" textLength="30.94" lengthAdjust="spacing">6000</text><line x1="533.9" y1="553.73" x2="1214.7" y2="553.73" stroke="#8d8d8d" stroke-width="1.7"/><text x="496.66" y="558.33" font-size="15.8" fill="#222" textLength="30.94" lengthAdjust="spacing">9000</text><line x1="533.9" y1="483.65" x2="1214.7" y2="483.65" stroke="#8d8d8d" stroke-width="1.7"/><text x="489.00" y="488.25" font-size="15.8" fill="#222" textLength="38.60" lengthAdjust="spacing">12000</text><line x1="533.9" y1="413.58" x2="1214.7" y2="413.58" stroke="#8d8d8d" stroke-width="1.7"/><text x="489.00" y="418.18" font-size="15.8" fill="#222" textLength="38.60" lengthAdjust="spacing">15000</text><line x1="533.9" y1="343.50" x2="1214.7" y2="343.50" stroke="#8d8d8d" stroke-width="1.7"/><text x="489.00" y="348.10" font-size="15.8" fill="#222" textLength="38.60" lengthAdjust="spacing">18000</text><line x1="538.9" y1="342.80" x2="538.9" y2="768.95" stroke="#8d8d8d" stroke-width="1.7"/><line x1="707.85" y1="763.95" x2="707.85" y2="768.95" stroke="#8d8d8d" stroke-width="1.7"/><line x1="876.80" y1="763.95" x2="876.80" y2="768.95" stroke="#8d8d8d" stroke-width="1.7"/><line x1="1045.75" y1="763.95" x2="1045.75" y2="768.95" stroke="#8d8d8d" stroke-width="1.7"/><line x1="1214.70" y1="763.95" x2="1214.70" y2="768.95" stroke="#8d8d8d" stroke-width="1.7"/><rect x="589.67" y="711.39" width="67.4" height="51.86" fill="#2e7d32"/><text x="622.58" y="788" font-size="15.5" fill="#1f1f1f" text-anchor="middle">CD early</text><text x="622.58" y="805.6" font-size="15.5" fill="#1f1f1f" text-anchor="middle">withdrawal</text><rect x="758.62" y="623.80" width="67.4" height="139.45" fill="#2e7d32"/><text x="791.53" y="788" font-size="15.5" fill="#1f1f1f" text-anchor="middle">VA surrender</text><text x="791.53" y="805.6" font-size="15.5" fill="#1f1f1f" text-anchor="middle">charge</text><rect x="927.58" y="600.44" width="67.4" height="162.81" fill="#2e7d32"/><text x="960.48" y="788" font-size="15.5" fill="#1f1f1f" text-anchor="middle">VA surrender</text><text x="960.48" y="805.6" font-size="15.5" fill="#1f1f1f" text-anchor="middle">+ tax penalty</text><rect x="1096.52" y="366.86" width="67.4" height="396.39" fill="#2e7d32"/><text x="1129.42" y="788" font-size="15.5" fill="#1f1f1f" text-anchor="middle">VA total early</text><text x="1129.42" y="805.6" font-size="15.5" fill="#1f1f1f" text-anchor="middle">exit impact*</text></svg><span class="t" style="left:483.82px;top:841px;line-height:15px;font-size:13.6px;color:#6e6e6e;transform:scaleX(0.9825);-webkit-text-stroke:0.2px;">*VA total early exit impact assumes year-2 liquidation with 6% surrender charge, 10% tax penalty on $10k gains (if under 59½),</span><span class="t" style="left:482.95px;top:859px;line-height:15px;font-size:13.6px;color:#6e6e6e;transform:scaleX(0.9853);-webkit-text-stroke:0.2px;">and 10% market decline at exit.</span><div class="card" style="left:1293px;top:271px;width:494.5px;height:302.5px;background:#f0fdf4;border:2px solid #c6ebd2;border-radius:7px"></div><span class="t" style="left:1334.38px;top:305px;line-height:21px;font-size:18.8px;color:#2e7d32;transform:scaleX(0.9533);font-weight:700;">How penalties differ</span><span class="t" style="left:1351.13px;top:345px;line-height:17px;font-size:15.4px;color:#262626;transform:scaleX(1.0275);-webkit-text-stroke:0.25px;">CD: penalty is generally explicit and contractually</span><span class="t" style="left:1334.91px;top:341px;line-height:25px;font-size:22px;color:#262626;">•</span><span class="t" style="left:1350.94px;top:365px;line-height:17px;font-size:15.4px;color:#262626;transform:scaleX(1.0260);-webkit-text-stroke:0.25px;">bounded.</span><span class="t" style="left:1351.84px;top:386px;line-height:17px;font-size:15.4px;color:#262626;transform:scaleX(1.0130);-webkit-text-stroke:0.25px;">VA: charges can include surrender schedules and</span><span class="t" style="left:1334.91px;top:382px;line-height:25px;font-size:22px;color:#262626;">•</span><span class="t" style="left:1350.87px;top:407px;line-height:17px;font-size:15.4px;color:#262626;transform:scaleX(1.0260);-webkit-text-stroke:0.25px;">market-value effects.</span><span class="t" style="left:1351.58px;top:427px;line-height:17px;font-size:15.4px;color:#262626;transform:scaleX(1.0180);-webkit-text-stroke:0.25px;">Tax penalties can apply depending on age and</span><span class="t" style="left:1334.91px;top:424px;line-height:25px;font-size:22px;color:#262626;">•</span><span class="t" style="left:1351.96px;top:448px;line-height:17px;font-size:15.4px;color:#262626;transform:scaleX(1.0260);-webkit-text-stroke:0.25px;">withdrawal structure.</span><span class="t" style="left:1350.61px;top:469px;line-height:17px;font-size:15.4px;color:#262626;transform:scaleX(1.0300);-webkit-text-stroke:0.25px;">Exchange recommendations can restart surrender</span><span class="t" style="left:1334.91px;top:465px;line-height:25px;font-size:22px;color:#262626;">•</span><span class="t" style="left:1350.94px;top:489px;line-height:17px;font-size:15.4px;color:#262626;transform:scaleX(1.0260);-webkit-text-stroke:0.25px;">periods.</span><div class="card" style="left:1293px;top:600px;width:494.5px;height:324.5px;background:#fef2f2;border:2px solid #f7d3d8;border-radius:7px"></div><span class="t" style="left:1335.23px;top:632px;line-height:21px;font-size:18.8px;color:#a61d3a;transform:scaleX(0.9246);font-weight:700;">Advisor talking point</span><span class="t" style="left:1334.95px;top:674px;line-height:18px;font-size:16.2px;color:#2a2a2a;transform:scaleX(1.0337);font-style:italic;-webkit-text-stroke:0.25px;">“A CD penalty is usually a known interest give-up. An</span><span class="t" style="left:1334.73px;top:696px;line-height:18px;font-size:16.2px;color:#2a2a2a;transform:scaleX(1.0492);font-style:italic;-webkit-text-stroke:0.25px;">annuity exit can involve a surrender charge, potential</span><span class="t" style="left:1334.47px;top:718px;line-height:18px;font-size:16.2px;color:#2a2a2a;transform:scaleX(1.0405);font-style:italic;-webkit-text-stroke:0.25px;">tax penalty and possible market loss all at once.”</span><span class="t" style="left:1334.68px;top:839px;line-height:17px;font-size:15.2px;color:#787878;transform:scaleX(1.0328);-webkit-text-stroke:0.2px;">This distinction should be front-and-center in suitability</span><span class="t" style="left:1334.39px;top:858px;line-height:17px;font-size:15.2px;color:#787878;transform:scaleX(0.9837);-webkit-text-stroke:0.2px;">discussions.</span><div class="a" style="left:411px;top:945px;width:1411px;height:1.5px;background:#e3e6e9;"></div><span class="t" style="left:426.48px;top:958px;line-height:14px;font-size:12.2px;color:#555;transform:scaleX(1.0181);">Penalty assumptions for training illustration only; actual product terms may vary.</span></div></div></div>
<div id="ribbon"><span class="t" style="left:3.29px;top:4px;line-height:17px;font-size:15.2px;color:#222;transform:scaleX(1.1053);font-weight:700;">Home</span><span class="t" style="left:76.58px;top:4px;line-height:17px;font-size:15.2px;color:#2a2a2a;transform:scaleX(1.1768);-webkit-text-stroke:0.35px;">Insert</span><span class="t" style="left:151.31px;top:4px;line-height:17px;font-size:15.2px;color:#2a2a2a;transform:scaleX(1.0883);-webkit-text-stroke:0.35px;">Draw</span><span class="t" style="left:219.05px;top:4px;line-height:17px;font-size:15.2px;color:#2a2a2a;transform:scaleX(1.1357);-webkit-text-stroke:0.35px;">Design</span><span class="t" style="left:303.25px;top:4px;line-height:17px;font-size:15.2px;color:#2a2a2a;transform:scaleX(1.1163);-webkit-text-stroke:0.35px;">Transitions</span><span class="t" style="left:418.70px;top:4px;line-height:17px;font-size:15.2px;color:#2a2a2a;transform:scaleX(1.1159);-webkit-text-stroke:0.35px;">Animations</span><span class="t" style="left:533.46px;top:4px;line-height:17px;font-size:15.2px;color:#2a2a2a;transform:scaleX(1.0790);-webkit-text-stroke:0.35px;">Slide Show</span><span class="t" style="left:644.37px;top:4px;line-height:17px;font-size:15.2px;color:#2a2a2a;transform:scaleX(1.1162);-webkit-text-stroke:0.35px;">Record</span><span class="t" style="left:726.73px;top:4px;line-height:17px;font-size:15.2px;color:#2a2a2a;transform:scaleX(1.0732);-webkit-text-stroke:0.35px;">Review</span><span class="t" style="left:810.33px;top:4px;line-height:17px;font-size:15.2px;color:#2a2a2a;transform:scaleX(1.1103);-webkit-text-stroke:0.35px;">View</span><div class="a" style="left:3.8px;top:25.8px;width:46.2px;height:3.6px;border-radius:2px;background:#b3462a"></div><div class="a" style="left:1562.5px;top:1.3px;width:125.5px;height:28px;border-radius:7px;background:#fff;box-shadow:0 0 0 0.7px rgba(0,0,0,.10),0 0.5px 1.5px rgba(0,0,0,.12)"></div><div class="a" style="left:1702.5px;top:1.3px;width:97.5px;height:28px;border-radius:7px;background:#fff;box-shadow:0 0 0 0.7px rgba(0,0,0,.10),0 0.5px 1.5px rgba(0,0,0,.12)"></div><div class="a" style="left:1813px;top:0.8px;width:108.5px;height:28.8px;border-radius:7.5px;background:#c7421d"></div><span class="t" style="left:1599.81px;top:7px;line-height:17px;font-size:15.4px;color:#111;transform:scaleX(1.0576);-webkit-text-stroke:0.35px;">Comments</span><span class="t" style="left:1738.67px;top:7px;line-height:17px;font-size:15.4px;color:#111;transform:scaleX(1.0663);-webkit-text-stroke:0.35px;">Record</span><span class="t" style="left:1850.77px;top:7px;line-height:17px;font-size:15.4px;color:#fff;transform:scaleX(0.9842);font-weight:700;">Share</span><span class="t" style="left:14.10px;top:85px;line-height:15px;font-size:13px;color:#1d1d1d;transform:scaleX(1.0367);-webkit-text-stroke:0.4px;">Paste</span><span class="t" style="left:93.14px;top:43px;line-height:15px;font-size:13px;color:#1d1d1d;transform:scaleX(1.0483);-webkit-text-stroke:0.4px;">Cut</span><span class="t" style="left:93.16px;top:70px;line-height:15px;font-size:13px;color:#1d1d1d;transform:scaleX(1.0261);-webkit-text-stroke:0.4px;">Copy</span><span class="t" style="left:92.68px;top:97px;line-height:15px;font-size:13px;color:#1d1d1d;transform:scaleX(1.0534);-webkit-text-stroke:0.4px;">Format</span><span class="t" style="left:184.73px;top:85px;line-height:15px;font-size:13px;color:#1d1d1d;transform:scaleX(1.0083);-webkit-text-stroke:0.4px;">New</span><span class="t" style="left:183.41px;top:99px;line-height:15px;font-size:13px;color:#1d1d1d;transform:scaleX(1.0431);-webkit-text-stroke:0.4px;">Slide</span><span class="t" style="left:260.88px;top:43px;line-height:15px;font-size:13px;color:#1d1d1d;transform:scaleX(1.0549);-webkit-text-stroke:0.4px;">Layout</span><span class="t" style="left:260.92px;top:70px;line-height:15px;font-size:13px;color:#1d1d1d;transform:scaleX(1.0168);-webkit-text-stroke:0.4px;">Reset</span><span class="t" style="left:261.41px;top:97px;line-height:15px;font-size:13px;color:#1d1d1d;transform:scaleX(1.0570);-webkit-text-stroke:0.4px;">Section</span><span class="t" style="left:1071.84px;top:85px;line-height:15px;font-size:13px;color:#9d9d9d;transform:scaleX(1.0628);-webkit-text-stroke:0.3px;">Convert to</span><span class="t" style="left:1076.40px;top:99px;line-height:15px;font-size:13px;color:#9d9d9d;transform:scaleX(1.0578);-webkit-text-stroke:0.3px;">SmartArt</span><span class="t" style="left:1170.84px;top:85px;line-height:15px;font-size:13px;color:#1d1d1d;transform:scaleX(1.0887);-webkit-text-stroke:0.4px;">Picture</span><span class="t" style="left:1230.73px;top:85px;line-height:15px;font-size:13px;color:#1d1d1d;transform:scaleX(1.0141);-webkit-text-stroke:0.4px;">Shapes</span><span class="t" style="left:1294.75px;top:85px;line-height:15px;font-size:13px;color:#1d1d1d;transform:scaleX(1.0194);-webkit-text-stroke:0.4px;">Text</span><span class="t" style="left:1294.71px;top:99px;line-height:15px;font-size:13px;color:#1d1d1d;transform:scaleX(1.0229);-webkit-text-stroke:0.4px;">Box</span><span class="t" style="left:1358.80px;top:85px;line-height:15px;font-size:13px;color:#1d1d1d;transform:scaleX(1.0371);-webkit-text-stroke:0.4px;">Arrange</span><span class="t" style="left:1426.42px;top:85px;line-height:15px;font-size:13px;color:#9d9d9d;transform:scaleX(1.0266);-webkit-text-stroke:0.3px;">Quick</span><span class="t" style="left:1425.21px;top:99px;line-height:15px;font-size:13px;color:#9d9d9d;transform:scaleX(1.0523);-webkit-text-stroke:0.3px;">Styles</span><span class="t" style="left:1507.42px;top:51px;line-height:15px;font-size:13px;color:#9d9d9d;transform:scaleX(1.0316);-webkit-text-stroke:0.3px;">Shape Fill</span><span class="t" style="left:1507.41px;top:90px;line-height:15px;font-size:13px;color:#9d9d9d;transform:scaleX(1.0457);-webkit-text-stroke:0.3px;">Shape Outline</span><span class="t" style="left:1638.90px;top:85px;line-height:15px;font-size:13px;color:#9d9d9d;transform:scaleX(1.0646);-webkit-text-stroke:0.3px;">Sensitivity</span><span class="t" style="left:1733.80px;top:85px;line-height:15px;font-size:13px;color:#1d1d1d;transform:scaleX(1.0586);-webkit-text-stroke:0.4px;">Add-ins</span><span class="t" style="left:1810.89px;top:85px;line-height:15px;font-size:13px;color:#1d1d1d;transform:scaleX(1.0442);-webkit-text-stroke:0.4px;">Designer</span><span class="t" style="left:1873.14px;top:85px;line-height:15px;font-size:13px;color:#1d1d1d;transform:scaleX(1.0605);-webkit-text-stroke:0.4px;">Copilot</span><div class="a" style="left:352.5px;top:44px;width:207px;height:27.6px;border-radius:4.5px;background:#fff;box-shadow:0 0 0 0.6px rgba(0,0,0,.045),0 0.5px 1.6px rgba(0,0,0,.11)"></div><div class="a" style="left:563.8px;top:44px;width:63.6px;height:27.6px;border-radius:4.5px;background:#fff;box-shadow:0 0 0 0.6px rgba(0,0,0,.045),0 0.5px 1.6px rgba(0,0,0,.11)"></div><span class="t" style="left:361.10px;top:87px;line-height:17px;font-size:15.6px;color:#bbbbbb;transform:scaleX(0.8993);font-weight:700;">B</span><span class="t" style="left:394.36px;top:87px;line-height:17px;font-size:15.6px;color:#bbbbbb;transform:scaleX(1.4897);font-style:italic;">I</span><span class="t" style="left:422.11px;top:86px;line-height:17px;font-size:15.2px;color:#bbbbbb;transform:scaleX(1.1511);">U</span><span class="t" style="left:452.94px;top:89px;line-height:16px;font-size:14.5px;color:#bbbbbb;transform:scaleX(0.9999);">ab</span><span class="t" style="left:488.17px;top:87px;line-height:17px;font-size:15.5px;color:#bbbbbb;transform:scaleX(1.0267);-webkit-text-stroke:0.3px;">x</span><span class="t" style="left:496.92px;top:88px;line-height:7px;font-size:7px;color:#bbbbbb;transform:scaleX(1.2308);">2</span><span class="t" style="left:519.87px;top:87px;line-height:17px;font-size:15.5px;color:#bbbbbb;transform:scaleX(1.0400);-webkit-text-stroke:0.3px;">x</span><span class="t" style="left:528.82px;top:99px;line-height:7px;font-size:7px;color:#bbbbbb;transform:scaleX(1.2308);color:#a9d8d0;">2</span><span class="t" style="left:546.50px;top:83px;line-height:18px;font-size:16.4px;color:#bbbbbb;transform:scaleX(0.8920);">AV</span><span class="t" style="left:592.50px;top:86px;line-height:20px;font-size:17.5px;color:#bbbbbb;transform:scaleX(0.9063);">Aa</span><span class="t" style="left:637.00px;top:44px;line-height:24px;font-size:21.5px;color:#bbbbbb;transform:scaleX(0.9692);">A</span><span class="t" style="left:671.00px;top:48px;line-height:19px;font-size:17px;color:#bbbbbb;transform:scaleX(0.9631);">A</span><span class="t" style="left:717.50px;top:45px;line-height:22px;font-size:20px;color:#bbbbbb;transform:scaleX(0.8930);">A</span><span class="t" style="left:707.00px;top:83px;line-height:21px;font-size:18.5px;color:#bbbbbb;transform:scaleX(0.9172);">A</span><svg class="a" style="left:0;top:0" width="1920" height="122" viewBox="0 0 1920 122" fill="none"><line x1="157.3" y1="44" x2="157.3" y2="119" stroke="#dcdcdc" stroke-width="1.2"/><line x1="339.4" y1="44" x2="339.4" y2="119" stroke="#dcdcdc" stroke-width="1.2"/><line x1="754.4" y1="44" x2="754.4" y2="119" stroke="#dcdcdc" stroke-width="1.2"/><line x1="1151.3" y1="44" x2="1151.3" y2="119" stroke="#dcdcdc" stroke-width="1.2"/><line x1="1342.5" y1="44" x2="1342.5" y2="119" stroke="#dcdcdc" stroke-width="1.2"/><line x1="1624.3" y1="44" x2="1624.3" y2="119" stroke="#dcdcdc" stroke-width="1.2"/><line x1="1717.5" y1="44" x2="1717.5" y2="119" stroke="#dcdcdc" stroke-width="1.2"/><line x1="1796.5" y1="44" x2="1796.5" y2="119" stroke="#dcdcdc" stroke-width="1.2"/><line x1="701.6" y1="46.5" x2="701.6" y2="68.5" stroke="#d4d4d4" stroke-width="1.2"/><line x1="867" y1="47" x2="867" y2="68" stroke="#d4d4d4" stroke-width="1.2"/><line x1="948.5" y1="47" x2="948.5" y2="68" stroke="#d4d4d4" stroke-width="1.2"/><line x1="1012.5" y1="47" x2="1012.5" y2="68" stroke="#d4d4d4" stroke-width="1.2"/><line x1="641.3" y1="86" x2="641.3" y2="107.5" stroke="#d4d4d4" stroke-width="1.2"/><line x1="901.2" y1="86" x2="901.2" y2="107.5" stroke="#d4d4d4" stroke-width="1.2"/><rect x="11.4" y="48.8" width="24" height="27.6" rx="1" fill="#fcfbf8" stroke="#f3a948" stroke-width="1.5"/><path d="M13.6 50.6 V74.2 H34 M33.2 50.6 V57" stroke="#fbd9a2" stroke-width="2.2" fill="none"/><path d="M16.6 52.2 V48.2 H20.2 C20.2 45.2 21.8 43.6 23.6 43.6 C25.4 43.6 27 45.2 27 48.2 H30.6 V52.2 Z" fill="#f9f9f9" stroke="#7d7d7d" stroke-width="1.3" stroke-linejoin="round"/><rect x="27.6" y="58.4" width="15.6" height="20.6" rx="0.8" fill="#fcfcfc" stroke="#5a5a5a" stroke-width="1.6"/><path d="M50.40 58.70 L53.50 62.30 L56.60 58.70" fill="none" stroke="#3a3a3a" stroke-width="1.9" stroke-linecap="round" stroke-linejoin="round"/><path d="M73 42 L74.6 42.6 L80.2 55.4 L79 56 Z M80 42 L78.4 42.6 L72.8 55.4 L74 56 Z" fill="#4a4a4a" stroke="#4a4a4a" stroke-width="0.5" stroke-linejoin="round"/><circle cx="72.7" cy="57.8" r="1.8" stroke="#3a9fdb" stroke-width="1.4" fill="#f6f6f6"/><circle cx="80.1" cy="57.8" r="1.8" stroke="#3a9fdb" stroke-width="1.4" fill="#f6f6f6"/><path d="M75.2 83.6 H67.6 V68.2 H73.4 L76 70.6" stroke="#555" stroke-width="1.3" stroke-linejoin="round"/><path d="M75 71.6 H81.6 L85.6 75.6 V86.2 H75 Z" fill="#fafafa" stroke="#555" stroke-width="1.3" stroke-linejoin="round"/><path d="M81.4 71.8 V75.8 H85.4 M77.6 79.4 H83 M77.6 82.2 H83" stroke="#666" stroke-width="1.1"/><path d="M132.90 76.00 L136.00 79.60 L139.10 76.00" fill="none" stroke="#3a3a3a" stroke-width="1.9" stroke-linecap="round" stroke-linejoin="round"/><path d="M67.6 103.2 L76.4 99.4 L82.8 104.4 L75.6 111.6 Z" fill="#fdfbf7" stroke="#f0a040" stroke-width="1.3" stroke-linejoin="round"/><path d="M71.6 107.4 L79.6 104.2 L82.4 104.6 L75.6 111.2 Z" fill="#f9c680"/><path d="M75.8 98.8 L78.8 96.8 L84 102.6 L82.6 104.6 Z" fill="#f9f9f9" stroke="#555" stroke-width="1.2" stroke-linejoin="round"/><path d="M80 97.6 L83.2 94.6 C84.6 93.6 86.2 95.2 85.4 96.6 L83 100.4 Z" fill="#f9f9f9" stroke="#555" stroke-width="1.2" stroke-linejoin="round"/><rect x="175.6" y="47.4" width="32.8" height="25.6" fill="#fbfbfb" stroke="#6c6c6c" stroke-width="1.5"/><rect x="178" y="49.8" width="27.8" height="20.6" stroke="#9a9a9a" stroke-width="1.1"/><path d="M178 56.6 H205.8 M190.6 56.6 V70.4" stroke="#9a9a9a" stroke-width="1.1"/><rect x="172" y="40.4" width="12" height="12.2" fill="#f6f6f6"/><path d="M181.4 41 V59 M172.6 49.8 H190.4" stroke="#36a875" stroke-width="1.6" stroke-linecap="round"/><path d="M217.90 58.70 L221.00 62.30 L224.10 58.70" fill="none" stroke="#3a3a3a" stroke-width="1.9" stroke-linecap="round" stroke-linejoin="round"/><rect x="234.9" y="42.5" width="18.6" height="14.8" fill="#fbfbfb" stroke="#5e5e5e" stroke-width="1.5"/><rect x="237.4" y="45" width="13.4" height="9.6" stroke="#8a8a8a" stroke-width="1"/><path d="M237.4 47.4 H250.8 M244.1 47.4 V54.6" stroke="#8a8a8a" stroke-width="1"/><path d="M310.10 49.50 L313.20 53.10 L316.30 49.50" fill="none" stroke="#3a3a3a" stroke-width="1.9" stroke-linecap="round" stroke-linejoin="round"/><rect x="234.9" y="69.2" width="18.6" height="14.4" fill="#fbfbfb" stroke="#5e5e5e" stroke-width="1.5"/><rect x="237.4" y="71.8" width="13.6" height="9.2" stroke="#8a8a8a" stroke-width="1"/><path d="M237.4 74.6 H251 M244.2 74.6 V81" stroke="#8a8a8a" stroke-width="1"/><rect x="233.6" y="66.6" width="10.4" height="10.2" fill="#f6f6f6"/><path d="M238.6 67.8 L235 71.4 L238.6 75 M235.4 71.4 H240.2 C242.6 71.4 243.8 73.4 243.6 76.6" stroke="#2e9ad6" stroke-width="1.4" stroke-linecap="round" stroke-linejoin="round"/><rect x="234.8" y="94.4" width="17.6" height="3.4" rx="0.6" fill="#8ad3ae" stroke="#5cbc8e" stroke-width="0.9"/><rect x="234.9" y="99.8" width="17.4" height="13" fill="#fbfbfb" stroke="#5e5e5e" stroke-width="1.5"/><rect x="237.4" y="102.2" width="12.2" height="7.8" stroke="#8a8a8a" stroke-width="1"/><path d="M315.70 102.60 L318.80 106.20 L321.90 102.60" fill="none" stroke="#3a3a3a" stroke-width="1.9" stroke-linecap="round" stroke-linejoin="round"/><path d="M548.30 56.60 L551.20 60.00 L554.10 56.60" fill="none" stroke="#555" stroke-width="1.9" stroke-linecap="round" stroke-linejoin="round"/><path d="M616.40 56.60 L619.30 60.00 L622.20 56.60" fill="none" stroke="#555" stroke-width="1.9" stroke-linecap="round" stroke-linejoin="round"/><line x1="423.4" y1="103.2" x2="433.6" y2="103.2" stroke="#bbbbbb" stroke-width="1.2"/><line x1="451.4" y1="97.6" x2="470.4" y2="97.6" stroke="#bbbbbb" stroke-width="1.2"/><path d="M547 101.6 H565 M549.2 99.8 L547 101.6 L549.2 103.4 M562.8 99.8 L565 101.6 L562.8 103.4" stroke="#bfe3dc" stroke-width="1.2" stroke-linecap="round" stroke-linejoin="round"/><path d="M574.50 95.45 L577.50 98.95 L580.50 95.45" fill="none" stroke="#b2b2b2" stroke-width="1.8" stroke-linecap="round" stroke-linejoin="round"/><path d="M620.80 95.45 L623.80 98.95 L626.80 95.45" fill="none" stroke="#b2b2b2" stroke-width="1.8" stroke-linecap="round" stroke-linejoin="round"/><path d="M684.60 95.45 L687.60 98.95 L690.60 95.45" fill="none" stroke="#b2b2b2" stroke-width="1.8" stroke-linecap="round" stroke-linejoin="round"/><path d="M731.30 95.45 L734.30 98.95 L737.30 95.45" fill="none" stroke="#b2b2b2" stroke-width="1.8" stroke-linecap="round" stroke-linejoin="round"/><path d="M651.2 51.6 L653.4 49.4 L655.6 51.6" stroke="#c4c4c4" stroke-width="1.1"/><path d="M683.2 50.2 L685.2 52.2 L687.2 50.2" stroke="#c4c4c4" stroke-width="1.1"/><rect x="-4.6" y="-2.6" width="9.2" height="5.2" rx="0.8" transform="translate(730.6 60) rotate(-38)" fill="#f3e8f8" stroke="#e0c4ea" stroke-width="1.1"/><path d="M664.4 97.6 L670.4 89.2 C671.8 87.4 675 89.6 673.8 91.6 L668.2 100 Z" stroke="#b0b0b0" stroke-width="1.3" stroke-linejoin="round"/><path d="M659.4 100.8 L664.6 97.4 L668.2 100 L664 100.8 Z" fill="#b8b8b8"/><rect x="772" y="48.3" width="3" height="3" fill="#c6e3ef"/><line x1="778" y1="49.8" x2="790" y2="49.8" stroke="#bbbbbb" stroke-width="1.3"/><rect x="772" y="55.6" width="3" height="3" fill="#c6e3ef"/><line x1="778" y1="57.1" x2="790" y2="57.1" stroke="#bbbbbb" stroke-width="1.3"/><rect x="772" y="62.900000000000006" width="3" height="3" fill="#c6e3ef"/><line x1="778" y1="64.4" x2="790" y2="64.4" stroke="#bbbbbb" stroke-width="1.3"/><path d="M800.40 56.45 L803.40 59.95 L806.40 56.45" fill="none" stroke="#b2b2b2" stroke-width="1.8" stroke-linecap="round" stroke-linejoin="round"/><rect x="818.4" y="47.599999999999994" width="1.4" height="4.4" fill="#c6e3ef"/><line x1="824" y1="49.8" x2="836" y2="49.8" stroke="#bbbbbb" stroke-width="1.3"/><rect x="818.4" y="54.9" width="1.4" height="4.4" fill="#c6e3ef"/><line x1="824" y1="57.1" x2="836" y2="57.1" stroke="#bbbbbb" stroke-width="1.3"/><rect x="818.4" y="62.2" width="1.4" height="4.4" fill="#c6e3ef"/><line x1="824" y1="64.4" x2="836" y2="64.4" stroke="#bbbbbb" stroke-width="1.3"/><path d="M846.30 56.45 L849.30 59.95 L852.30 56.45" fill="none" stroke="#b2b2b2" stroke-width="1.8" stroke-linecap="round" stroke-linejoin="round"/><line x1="883" y1="49.8" x2="900.4" y2="49.8" stroke="#bbbbbb" stroke-width="1.3"/><line x1="883" y1="64.4" x2="900.4" y2="64.4" stroke="#bbbbbb" stroke-width="1.3"/><line x1="893.4" y1="54.7" x2="900.4" y2="54.7" stroke="#bbbbbb" stroke-width="1.3"/><line x1="893.4" y1="59.5" x2="900.4" y2="59.5" stroke="#bbbbbb" stroke-width="1.3"/><path d="M890 57.1 H884 M886.4 54.8 L884 57.1 L886.4 59.4" stroke="#c6e3ef" stroke-width="1.2" stroke-linecap="round" stroke-linejoin="round"/><line x1="915" y1="49.8" x2="932.4" y2="49.8" stroke="#bbbbbb" stroke-width="1.3"/><line x1="915" y1="64.4" x2="932.4" y2="64.4" stroke="#bbbbbb" stroke-width="1.3"/><line x1="925.4" y1="54.7" x2="932.4" y2="54.7" stroke="#bbbbbb" stroke-width="1.3"/><line x1="925.4" y1="59.5" x2="932.4" y2="59.5" stroke="#bbbbbb" stroke-width="1.3"/><path d="M916 57.1 H922 M919.6 54.8 L922 57.1 L919.6 59.4" stroke="#c6e3ef" stroke-width="1.2" stroke-linecap="round" stroke-linejoin="round"/><line x1="971.8" y1="49.8" x2="983" y2="49.8" stroke="#bbbbbb" stroke-width="1.3"/><line x1="971.8" y1="54.7" x2="983" y2="54.7" stroke="#bbbbbb" stroke-width="1.3"/><line x1="971.8" y1="59.5" x2="983" y2="59.5" stroke="#bbbbbb" stroke-width="1.3"/><line x1="971.8" y1="64.4" x2="983" y2="64.4" stroke="#bbbbbb" stroke-width="1.3"/><path d="M966.4 49.4 V65 M964.2 51.6 L966.4 49.4 L968.6 51.6 M964.2 62.8 L966.4 65 L968.6 62.8" stroke="#cfe3ee" stroke-width="1.2" stroke-linecap="round" stroke-linejoin="round"/><path d="M992.00 56.45 L995.00 59.95 L998.00 56.45" fill="none" stroke="#b2b2b2" stroke-width="1.8" stroke-linecap="round" stroke-linejoin="round"/><line x1="1030" y1="53.4" x2="1036.6" y2="53.4" stroke="#c9e3ee" stroke-width="1.3"/><line x1="1039" y1="53.4" x2="1045.6" y2="53.4" stroke="#c9e3ee" stroke-width="1.3"/><line x1="1030" y1="57.1" x2="1036.6" y2="57.1" stroke="#c9e3ee" stroke-width="1.3"/><line x1="1039" y1="57.1" x2="1045.6" y2="57.1" stroke="#c9e3ee" stroke-width="1.3"/><line x1="1030" y1="60.8" x2="1036.6" y2="60.8" stroke="#c9e3ee" stroke-width="1.3"/><line x1="1039" y1="60.8" x2="1045.6" y2="60.8" stroke="#c9e3ee" stroke-width="1.3"/><path d="M1056.60 56.45 L1059.60 59.95 L1062.60 56.45" fill="none" stroke="#b2b2b2" stroke-width="1.8" stroke-linecap="round" stroke-linejoin="round"/><line x1="772.6" y1="88.6" x2="790" y2="88.6" stroke="#bbbbbb" stroke-width="1.3"/><line x1="804.2" y1="88.6" x2="822" y2="88.6" stroke="#bbbbbb" stroke-width="1.3"/><line x1="836" y1="88.6" x2="853.2" y2="88.6" stroke="#bbbbbb" stroke-width="1.3"/><line x1="867.6" y1="88.6" x2="885" y2="88.6" stroke="#bbbbbb" stroke-width="1.3"/><line x1="772.6" y1="93.6" x2="785.2" y2="93.6" stroke="#bbbbbb" stroke-width="1.3"/><line x1="807" y1="93.6" x2="819" y2="93.6" stroke="#bbbbbb" stroke-width="1.3"/><line x1="840.8" y1="93.6" x2="853.2" y2="93.6" stroke="#bbbbbb" stroke-width="1.3"/><line x1="867.6" y1="93.6" x2="885" y2="93.6" stroke="#bbbbbb" stroke-width="1.3"/><line x1="772.6" y1="98.4" x2="790" y2="98.4" stroke="#bbbbbb" stroke-width="1.3"/><line x1="804.2" y1="98.4" x2="822" y2="98.4" stroke="#bbbbbb" stroke-width="1.3"/><line x1="836" y1="98.4" x2="853.2" y2="98.4" stroke="#bbbbbb" stroke-width="1.3"/><line x1="867.6" y1="98.4" x2="885" y2="98.4" stroke="#bbbbbb" stroke-width="1.3"/><line x1="772.6" y1="103.4" x2="785.2" y2="103.4" stroke="#bbbbbb" stroke-width="1.3"/><line x1="807" y1="103.4" x2="819" y2="103.4" stroke="#bbbbbb" stroke-width="1.3"/><line x1="840.8" y1="103.4" x2="853.2" y2="103.4" stroke="#bbbbbb" stroke-width="1.3"/><line x1="867.6" y1="103.4" x2="885" y2="103.4" stroke="#bbbbbb" stroke-width="1.3"/><path d="M921.4 87 V105 M919 102.6 L921.4 105 L923.8 102.6" stroke="#b3b3b3" stroke-width="1.2" stroke-linecap="round" stroke-linejoin="round"/><path d="M930.2 97.4 V105 M927.8 102.6 L930.2 105 L932.6 102.6" stroke="#b3b3b3" stroke-width="1.2" stroke-linecap="round" stroke-linejoin="round"/><path d="M926.8 95 L930.2 87.2 L933.6 95 M928 92.4 H932.4" stroke="#d0e4ee" stroke-width="1.2" stroke-linejoin="round"/><path d="M944.60 95.45 L947.60 98.95 L950.60 95.45" fill="none" stroke="#b2b2b2" stroke-width="1.8" stroke-linecap="round" stroke-linejoin="round"/><path d="M967 90 H963 V102.4 H967 M977.4 90 H981.4 V102.4 H977.4" stroke="#b3b3b3" stroke-width="1.3"/><path d="M967.4 96.2 H977 " stroke="#c9dfe8" stroke-width="1.2"/><path d="M972.2 87.6 V93.4 M970.2 89.6 L972.2 87.6 L974.2 89.6 M972.2 99 V105 M970.2 103 L972.2 105 L974.2 103" stroke="#cfdff0" stroke-width="1.2" stroke-linecap="round" stroke-linejoin="round"/><path d="M991.00 95.45 L994.00 98.95 L997.00 95.45" fill="none" stroke="#b2b2b2" stroke-width="1.8" stroke-linecap="round" stroke-linejoin="round"/><path d="M1079 47.4 H1100.6 L1109.6 58.2 L1100.6 68.6 H1079 L1087.6 58.2 Z" fill="#dcefe0" stroke="#cfe6d4" stroke-width="1"/><rect x="1091.6" y="59.6" width="20.8" height="13" fill="#fafafa" stroke="#bdbdbd" stroke-width="1.2"/><path d="M1095 64 H1096.4 M1098.4 64 H1109.4 M1095 68 H1096.4 M1098.4 68 H1109.4" stroke="#c8c8c8" stroke-width="1.1"/><path d="M1122.40 58.75 L1125.40 62.25 L1128.40 58.75" fill="none" stroke="#b2b2b2" stroke-width="1.8" stroke-linecap="round" stroke-linejoin="round"/><rect x="1169.4" y="47.6" width="33" height="24" fill="#fafafa"/><path d="M1169.6 62 L1178.6 54 L1193.4 69.6 L1196 71.4 H1169.6 Z" fill="#6fb3e6"/><path d="M1188 64.6 L1193.6 60 L1202.2 68 V71.4 H1195 Z" fill="#6fb3e6"/><path d="M1169.6 62 L1178.6 54 L1195.4 71.4 M1188 64.4 L1193.6 60 L1202.2 68" stroke="#2a6fa8" stroke-width="1.1" stroke-linejoin="round"/><circle cx="1195.6" cy="54" r="2" fill="#f29b45"/><rect x="1169.4" y="47.6" width="33" height="24" stroke="#3d3d3d" stroke-width="1.4"/><path d="M1211.90 58.70 L1215.00 62.30 L1218.10 58.70" fill="none" stroke="#3a3a3a" stroke-width="1.9" stroke-linecap="round" stroke-linejoin="round"/><rect x="1230.6" y="44.2" width="21.6" height="21" fill="#6fb3e6" stroke="#3f93d2" stroke-width="1"/><circle cx="1251.6" cy="64.8" r="11.6" fill="#fbfbfb" stroke="#4a4a4a" stroke-width="1.3"/><path d="M1272.50 58.70 L1275.60 62.30 L1278.70 58.70" fill="none" stroke="#3a3a3a" stroke-width="1.9" stroke-linecap="round" stroke-linejoin="round"/><rect x="1290" y="46.2" width="35" height="27.6" fill="#fafafa" stroke="#5a5a5a" stroke-width="1.4"/><rect x="1288.3" y="44.5" width="3.4" height="3.4" fill="#7fc0e8" stroke="#3b96cf" stroke-width="0.8"/><rect x="1323.3" y="44.5" width="3.4" height="3.4" fill="#7fc0e8" stroke="#3b96cf" stroke-width="0.8"/><rect x="1288.3" y="72.1" width="3.4" height="3.4" fill="#7fc0e8" stroke="#3b96cf" stroke-width="0.8"/><rect x="1323.3" y="72.1" width="3.4" height="3.4" fill="#7fc0e8" stroke="#3b96cf" stroke-width="0.8"/><path d="M1301 68.6 L1307.6 52.6 L1314.2 68.6 M1303.4 63.2 H1311.8" stroke="#3b96cf" stroke-width="1.5" stroke-linejoin="round"/><rect x="1364.6" y="48.6" width="23.4" height="22.6" fill="#fbd28c" stroke="#f6bb62" stroke-width="1.2"/><rect x="1359.8" y="43.8" width="13.4" height="13" fill="#fbfbfb" stroke="#4a4a4a" stroke-width="1.4"/><rect x="1379.6" y="63.4" width="13.6" height="13" fill="#fbfbfb" stroke="#4a4a4a" stroke-width="1.4"/><path d="M1402.50 58.70 L1405.60 62.30 L1408.70 58.70" fill="none" stroke="#262626" stroke-width="1.9" stroke-linecap="round" stroke-linejoin="round"/><rect x="1421.2" y="44" width="32" height="31.4" rx="1.6" fill="#f8f8f8" stroke="#d6d6d6" stroke-width="1.1"/><path d="M1455.6 55.4 L1443.6 71.4 L1441.4 69.8 L1454 54.4 C1455 53.4 1456.4 54.2 1455.6 55.4 Z" fill="#f4f4f4" stroke="#c2c2c2" stroke-width="1.1" stroke-linejoin="round"/><path d="M1441.2 69.8 C1438.2 69.4 1436.2 71.6 1435.6 74.4 C1434.8 76.6 1432.6 77.4 1430.6 77.6 C1435.6 80 1441.6 78.2 1443.4 71.4 Z" fill="#c5dff0"/><path d="M1463.60 58.75 L1466.60 62.25 L1469.60 58.75" fill="none" stroke="#b2b2b2" stroke-width="1.8" stroke-linecap="round" stroke-linejoin="round"/><path d="M1484.6 56.4 L1491 48.8 L1497 54.6 L1490.4 61.4 Z" stroke="#bdbdbd" stroke-width="1.2" stroke-linejoin="round"/><path d="M1490.6 49.2 V52 M1495 53.6 C1497.6 53.8 1498.6 56 1498.4 58.6" stroke="#bdbdbd" stroke-width="1.2" stroke-linecap="round"/><path d="M1573.80 56.65 L1576.80 60.15 L1579.80 56.65" fill="none" stroke="#b2b2b2" stroke-width="1.8" stroke-linecap="round" stroke-linejoin="round"/><path d="M1490.6 88.4 H1482.8 V99.6 H1494.6 V96" stroke="#c2c2c2" stroke-width="1.2"/><path d="M1487.6 98.4 L1489 94.6 L1497 87.6 C1498.4 86.6 1500 88.2 1499 89.6 L1491.6 97.2 Z" fill="#d7e9f4" stroke="#bcd5e6" stroke-width="1" stroke-linejoin="round"/><path d="M1601.00 95.45 L1604.00 98.95 L1607.00 95.45" fill="none" stroke="#b2b2b2" stroke-width="1.8" stroke-linecap="round" stroke-linejoin="round"/><rect x="1650.6" y="43.6" width="24" height="32.6" fill="#f3f8fb" stroke="#d5e6ef" stroke-width="1.1"/><rect x="-9" y="-2.6" width="18" height="5.2" rx="2.2" transform="translate(1662.6 61.2) rotate(40)" fill="#f5f8fb" stroke="#c4d7ee" stroke-width="1.1"/><rect x="-6.6" y="-3.2" width="13.2" height="6.4" transform="translate(1672.2 51.4) rotate(40)" fill="#eef3fa" stroke="#c4d7ee" stroke-width="1.1"/><rect x="-3.4" y="-3" width="6.8" height="6" transform="translate(1678.6 46.2) rotate(40)" fill="#f5f8fb" stroke="#cfdff0" stroke-width="1.1"/><path d="M1689.20 58.75 L1692.20 62.25 L1695.20 58.75" fill="none" stroke="#b2b2b2" stroke-width="1.8" stroke-linecap="round" stroke-linejoin="round"/><rect x="1739.4" y="43.2" width="33.6" height="33.6" fill="#fdf1eb" stroke="#e89f84" stroke-width="1.4"/><rect x="1742.8" y="46.6" width="12" height="12" fill="#fdf8f5" stroke="#e89f84" stroke-width="1.2"/><rect x="1757.8" y="46.6" width="12" height="12" fill="#fdf8f5" stroke="#e89f84" stroke-width="1.2"/><rect x="1742.8" y="61.6" width="12" height="12" fill="#fdf8f5" stroke="#e89f84" stroke-width="1.2"/><rect x="1757.8" y="61.6" width="12" height="12" fill="#fdf8f5" stroke="#e89f84" stroke-width="1.2"/><rect x="1821.8" y="47.6" width="32.6" height="25.4" fill="#fbfbfb" stroke="#6e6e6e" stroke-width="1.3"/><rect x="1824.4" y="50.2" width="27.4" height="20.2" stroke="#8a8a8a" stroke-width="1.1"/><path d="M1824.4 56.6 H1851.8 M1844.6 56.6 V70.4" stroke="#8a8a8a" stroke-width="1.1"/><path d="M1826.6 41.2 H1833.6 L1829.8 48.4 H1833.8 L1821.6 64.6 L1824.8 53.8 H1819.6 Z" fill="#f9c562" stroke="#f0a640" stroke-width="0.9" stroke-linejoin="round"/><defs><linearGradient id="cpA" x1="0" y1="0" x2="0" y2="1"><stop offset="0" stop-color="#2b8ee8"/><stop offset="0.45" stop-color="#37c2a0"/><stop offset="0.8" stop-color="#f5c12d"/><stop offset="1" stop-color="#f0652b"/></linearGradient><linearGradient id="cpB" x1="0" y1="0" x2="0" y2="1"><stop offset="0" stop-color="#8b5cf0"/><stop offset="0.5" stop-color="#e05cc0"/><stop offset="1" stop-color="#ff8a4c"/></linearGradient><linearGradient id="cpC" x1="0" y1="0" x2="1" y2="0"><stop offset="0" stop-color="#1f6fd6"/><stop offset="1" stop-color="#3fa0f0"/></linearGradient></defs><path d="M1883.6 44 H1897.4 C1899.8 44 1901 45.4 1901.6 47.4 L1903 52 H1898 L1893.4 67.4 C1892.8 69.4 1891.4 70.6 1889.2 70.6 H1882 C1878.4 70.6 1876.4 67.6 1877.4 64.2 L1881 48 C1881.4 45.6 1882.2 44 1883.6 44 Z" fill="url(#cpA)"/><path d="M1907.4 75.6 H1893.6 C1891.2 75.6 1890 74.2 1889.4 72.2 L1888.4 68.6 H1893 L1897.6 52.4 C1898.2 50.4 1899.6 49.2 1901.8 49.2 H1909 C1912.6 49.2 1914.6 52.2 1913.6 55.6 L1910 71.6 C1909.6 74 1908.8 75.6 1907.4 75.6 Z" fill="url(#cpB)"/><path d="M1893.4 44 H1897.4 C1899.8 44 1901 45.4 1901.6 47.4 L1903 52 H1897.6 L1896.2 47.4 C1895.6 45.4 1894.8 44.4 1893.4 44 Z" fill="url(#cpC)"/><path d="M1893.4 67.4 L1897.6 52.4 C1897.9 51.5 1898.4 50.7 1899 50.2 L1897.6 55 L1893.4 70 C1893.1 70.9 1892.6 71.7 1892 72.2 Z" fill="#fff" opacity="0.85"/><path d="M1576.6 7.6 H1590.4 C1591.8 7.6 1592.6 8.4 1592.6 9.8 V18.4 C1592.6 19.8 1591.8 20.6 1590.4 20.6 H1583 L1578.6 24 V20.6 H1576.6 C1575.2 20.6 1574.4 19.8 1574.4 18.4 V9.8 C1574.4 8.4 1575.2 7.6 1576.6 7.6 Z" stroke="#111" stroke-width="1.5" stroke-linejoin="round"/><circle cx="1723.2" cy="15.1" r="8.8" stroke="#111" stroke-width="1.6"/><circle cx="1723.2" cy="15.1" r="5.3" fill="#000"/><path d="M1833 10 H1830.6 C1828.6 10 1827.4 11.2 1827.4 13.2 V20 C1827.4 22 1828.6 23.2 1830.6 23.2 H1839.6 C1841.6 23.2 1842.8 22 1842.8 20 V18.6" stroke="#fff" stroke-width="1.5" stroke-linecap="round" stroke-linejoin="round"/><path d="M1831.6 18.4 C1832 13.6 1834.8 11.2 1839 11 V7.6 L1845 12.6 L1839 17.6 V14.4 C1835.8 14.4 1833.4 15.6 1831.6 18.4 Z" stroke="#fff" stroke-width="1.5" stroke-linejoin="round"/><path d="M1904.20 14.10 L1908.20 18.30 L1912.20 14.10" fill="none" stroke="#fff" stroke-width="1.6" stroke-linecap="round" stroke-linejoin="round"/></svg></div>
</div>
</body></html>
